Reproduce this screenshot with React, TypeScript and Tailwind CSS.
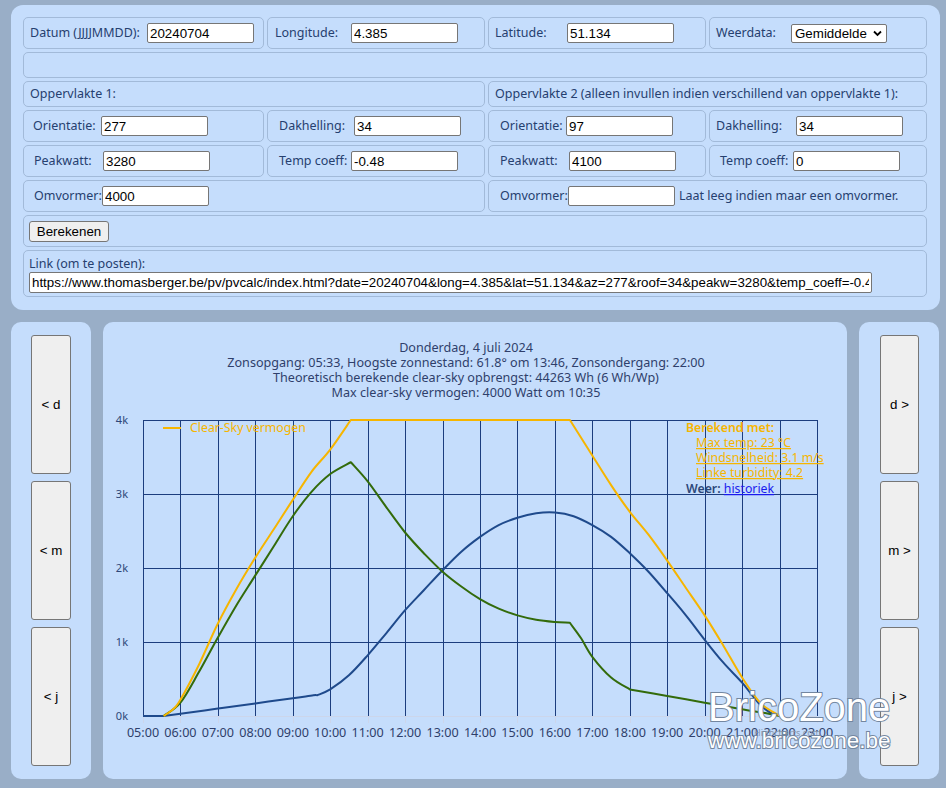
import React from "react";

type P = [number, number];

const hx = (t: number) => 40 + (t - 5) * (674 / 18);
const vy = (v: number) => 394 - v * 74;

function seg(pts: P[], first: boolean) {
  const p = pts.map(([t, v]) => [hx(t), vy(v)]);
  let d = first ? `M${p[0][0].toFixed(1)},${p[0][1].toFixed(1)}` : "";
  for (let i = 0; i < p.length - 1; i++) {
    const p0 = p[i - 1] || p[i];
    const p1 = p[i];
    const p2 = p[i + 1];
    const p3 = p[i + 2] || p2;
    const k = 1 / 6;
    const c1x = p1[0] + (p2[0] - p0[0]) * k;
    const c1y = p1[1] + (p2[1] - p0[1]) * k;
    const c2x = p2[0] - (p3[0] - p1[0]) * k;
    const c2y = p2[1] - (p3[1] - p1[1]) * k;
    d += ` C${c1x.toFixed(1)},${c1y.toFixed(1)} ${c2x.toFixed(1)},${c2y.toFixed(1)} ${p2[0].toFixed(1)},${p2[1].toFixed(1)}`;
  }
  return d;
}

function path(segs: P[][]) {
  return segs.map((s, i) => seg(s, i === 0)).join(" ");
}

const yellow = path([
  [
    [5.55, 0],
    [5.8, 0.09],
    [6, 0.22],
    [6.5, 0.7],
    [7, 1.25],
    [7.5, 1.72],
    [8, 2.14],
    [8.5, 2.53],
    [9, 2.92],
    [9.5, 3.3],
    [10, 3.6],
    [10.55, 4.0],
  ],
  [
    [10.55, 4.0],
    [16.4, 4.0],
  ],
  [
    [16.4, 4.0],
    [17, 3.52],
    [17.5, 3.12],
    [18, 2.76],
    [18.5, 2.45],
    [19, 2.1],
    [19.5, 1.73],
    [20, 1.36],
    [20.5, 0.95],
    [21, 0.52],
    [21.5, 0.17],
    [22.02, 0],
  ],
]);

const green = path([
  [
    [5.55, 0],
    [6, 0.18],
    [6.5, 0.6],
    [7, 1.06],
    [7.5, 1.5],
    [8, 1.9],
    [8.5, 2.3],
    [9, 2.7],
    [9.5, 3.03],
    [10, 3.27],
    [10.55, 3.43],
  ],
  [
    [10.55, 3.43],
    [11, 3.17],
    [11.5, 2.82],
    [12, 2.48],
    [12.5, 2.2],
    [13, 1.95],
    [13.5, 1.75],
    [14, 1.58],
    [14.5, 1.45],
    [15, 1.36],
    [15.5, 1.3],
    [16, 1.27],
    [16.4, 1.26],
  ],
  [
    [16.4, 1.26],
    [16.7, 1.05],
    [17, 0.8],
    [17.5, 0.52],
    [18, 0.36],
  ],
  [
    [18, 0.36],
    [19, 0.27],
    [20, 0.18],
    [21, 0.09],
    [21.6, 0.04],
    [22, 0],
  ],
]);

const blue = path([
  [
    [5, 0],
    [5.55, 0],
  ],
  [
    [5.55, 0],
    [6, 0.03],
    [7, 0.1],
    [8, 0.17],
    [9, 0.24],
    [9.55, 0.28],
    [9.65, 0.28],
  ],
  [
    [9.65, 0.28],
    [10, 0.36],
    [10.5, 0.55],
    [11, 0.82],
    [11.5, 1.12],
    [12, 1.43],
    [12.5, 1.7],
    [13, 1.97],
    [13.5, 2.22],
    [14, 2.42],
    [14.5, 2.58],
    [15, 2.68],
    [15.5, 2.74],
    [16, 2.75],
    [16.5, 2.7],
    [17, 2.58],
    [17.5, 2.42],
    [18, 2.2],
    [18.5, 1.95],
    [19, 1.66],
    [19.5, 1.36],
    [20, 1.03],
    [20.5, 0.72],
    [21, 0.45],
    [21.5, 0.14],
    [21.9, 0],
  ],
]);

const hours = Array.from({ length: 19 }, (_, i) => 5 + i);
const pad = (n: number) => (n < 10 ? `0${n}` : `${n}`);

function Chart() {
  const gx = (t: number) => Math.round(hx(t)) + 0.5;
  const ff = "'Noto Sans', 'DejaVu Sans', sans-serif";
  return (
    <svg width="744" height="457" viewBox="0 0 744 457" className="block">
      <g fontFamily={ff} fontSize="12.6" fill="#2f3f6b" textAnchor="middle">
        <text x="363" y="30">Donderdag, 4 juli 2024</text>
        <text x="363" y="44.5">
          Zonsopgang: 05:33, Hoogste zonnestand: 61.8° om 13:46, Zonsondergang: 22:00
        </text>
        <text x="363" y="59.5">Theoretisch berekende clear-sky opbrengst: 44263 Wh (6 Wh/Wp)</text>
        <text x="363" y="74.5">Max clear-sky vermogen: 4000 Watt om 10:35</text>
      </g>
      <g stroke="#1c3d7e" strokeWidth="1" shapeRendering="crispEdges">
        {[0, 1, 2, 3, 4].map((v) => (
          <line key={v} x1="40" x2="714" y1={Math.round(vy(v)) + 0.5} y2={Math.round(vy(v)) + 0.5} />
        ))}
        {hours.map((h) => (
          <line key={h} x1={gx(h)} x2={gx(h)} y1="98" y2="394" />
        ))}
      </g>
      <g stroke="#ccd6eb" strokeWidth="1" shapeRendering="crispEdges">
        <line x1="40" x2="714" y1="394.5" y2="394.5" />
        {hours.map((h) => (
          <line key={h} x1={gx(h)} x2={gx(h)} y1="395" y2="401" />
        ))}
      </g>
      <g fontFamily={ff} fontSize="11" fill="#2d4778" textAnchor="end">
        {[0, 1, 2, 3, 4].map((v) => (
          <text key={v} x="25" y={vy(v) + 4}>
            {v}k
          </text>
        ))}
      </g>
      <g fontFamily={ff} fontSize="12.6" fill="#2f3f6b" textAnchor="middle">
        {hours.map((h) => (
          <text key={h} x={hx(h)} y="414.5">
            {pad(h)}:00
          </text>
        ))}
      </g>
      <text x="718" y="414" textAnchor="end" fontFamily={ff} fontSize="9" fill="#8a97ad">
        Highcharts.com
      </text>
      <path d={blue} fill="none" stroke="#1f4a8c" strokeWidth="2" strokeLinejoin="round" />
      <path d={green} fill="none" stroke="#336b0b" strokeWidth="2" strokeLinejoin="round" />
      <path d={yellow} fill="none" stroke="#f6b500" strokeWidth="2" strokeLinejoin="round" />
      <line x1="60" x2="78" y1="106" y2="106" stroke="#f6b500" strokeWidth="2" />
      <text x="87" y="110" fontFamily={ff} fontSize="12.3" fill="#f6b500">
        Clear-Sky vermogen
      </text>
      <g fontFamily={ff} fontSize="12.3" fill="#f6b500">
        <text x="583" y="110" fontWeight="600">
          Berekend met:
        </text>
        <text x="593" y="125" textDecoration="underline">
          Max temp: 23 °C
        </text>
        <text x="593" y="140" textDecoration="underline">
          Windsnelheid: 3.1 m/s
        </text>
        <text x="593" y="155" textDecoration="underline">
          Linke turbidity: 4.2
        </text>
        <text x="583" y="171" fill="#2d4778" fontWeight="600">
          Weer:{" "}
          <tspan fill="#1a1aee" fontWeight="400" textDecoration="underline">
            historiek
          </tspan>
        </text>
      </g>
    </svg>
  );
}

const labelCls = "shrink-0 whitespace-nowrap text-[12.5px] text-[#26406f] [font-family:'Noto_Sans',Lato,sans-serif]";
const inputCls =
  "h-[20px] w-[107px] shrink-0 rounded-[2px] border border-[#767676] bg-white px-[2px] text-[13.33px] leading-[18px] text-black outline-none [font-family:'Liberation_Sans',Arial,sans-serif]";
const cellCls = "flex items-center rounded-[5px] border border-[#a2bad9]";

function Field({ label, value, lwCls }: { label: string; value: string; lwCls: string }) {
  return (
    <>
      <span className={`${labelCls} ${lwCls}`}>{label}</span>
      <input className={inputCls} defaultValue={value} readOnly />
    </>
  );
}

function NavButton({ text }: { text: string }) {
  return (
    <button className="h-[139px] w-full rounded-[3px] border border-[#767676] bg-[#efefef] text-[13.33px] font-normal text-black [font-family:'Liberation_Sans',Arial,sans-serif]">
      {text}
    </button>
  );
}

export default function App() {
  const link =
    "https://www.thomasberger.be/pv/pvcalc/index.html?date=20240704&long=4.385&lat=51.134&az=277&roof=34&peakw=3280&temp_coeff=-0.48&inverter=4000&az2=97&roof2=34&peakw2=4100&temp_coeff2=0&weather=avg";
  return (
    <div className="relative h-[788px] w-[946px] overflow-hidden bg-[#99aec7] pl-[11px] pt-[5px]">
      <div className="w-[929px] rounded-[12px] bg-[#c5ddfc] px-[12px] pb-[13px] pt-[12px]">
        <div className="grid grid-cols-[241px_218px_218px_218px] gap-[3px]">
          <div className={`${cellCls} h-[32px] pl-[6px]`}>
            <Field label="Datum (JJJJMMDD):" value="20240704" lwCls="w-[117px]" />
          </div>
          <div className={`${cellCls} h-[32px] pl-[7px]`}>
            <Field label="Longitude:" value="4.385" lwCls="w-[76px]" />
          </div>
          <div className={`${cellCls} h-[32px] pl-[6px]`}>
            <Field label="Latitude:" value="51.134" lwCls="w-[72px]" />
          </div>
          <div className={`${cellCls} h-[32px] pl-[6px]`}>
            <span className={`${labelCls} w-[75px]`}>Weerdata:</span>
            <div
              role="combobox"
              className="relative flex h-[19px] w-[96px] shrink-0 items-center rounded-[2px] border border-[#767676] bg-white pl-[3px] text-[13.33px] leading-[17px] text-black [font-family:'Liberation_Sans',Arial,sans-serif]"
            >
              Gemiddelde
              <svg className="absolute right-[4px] top-[5px]" width="9" height="7" viewBox="0 0 9 7">
                <path d="M1 1.5 L4.5 5 L8 1.5" fill="none" stroke="#000" strokeWidth="1.8" />
              </svg>
            </div>
          </div>
          <div className={`${cellCls} col-span-4 h-[26px]`} />
          <div className={`${cellCls} col-span-2 h-[26px] pl-[6px]`}>
            <span className={labelCls}>Oppervlakte 1:</span>
          </div>
          <div className={`${cellCls} col-span-2 h-[26px] pl-[6px]`}>
            <span className={labelCls}>Oppervlakte 2 (alleen invullen indien verschillend van oppervlakte 1):</span>
          </div>
          <div className={`${cellCls} h-[32px] pl-[9px]`}>
            <Field label="Orientatie:" value="277" lwCls="w-[68px]" />
          </div>
          <div className={`${cellCls} h-[32px] pl-[11px]`}>
            <Field label="Dakhelling:" value="34" lwCls="w-[75px]" />
          </div>
          <div className={`${cellCls} h-[32px] pl-[11px]`}>
            <Field label="Orientatie:" value="97" lwCls="w-[66px]" />
          </div>
          <div className={`${cellCls} h-[32px] pl-[6px]`}>
            <Field label="Dakhelling:" value="34" lwCls="w-[80px]" />
          </div>
          <div className={`${cellCls} h-[32px] pl-[10px]`}>
            <Field label="Peakwatt:" value="3280" lwCls="w-[69px]" />
          </div>
          <div className={`${cellCls} h-[32px] pl-[11px]`}>
            <Field label="Temp coeff:" value="-0.48" lwCls="w-[72px]" />
          </div>
          <div className={`${cellCls} h-[32px] pl-[11px]`}>
            <Field label="Peakwatt:" value="4100" lwCls="w-[69px]" />
          </div>
          <div className={`${cellCls} h-[32px] pl-[10px]`}>
            <Field label="Temp coeff:" value="0" lwCls="w-[73px]" />
          </div>
          <div className={`${cellCls} col-span-2 h-[32px] pl-[10px]`}>
            <Field label="Omvormer:" value="4000" lwCls="w-[68px]" />
          </div>
          <div className={`${cellCls} col-span-2 h-[32px] pl-[11px]`}>
            <Field label="Omvormer:" value="" lwCls="w-[68px]" />
            <span className={`${labelCls} ml-[4px]`}>Laat leeg indien maar een omvormer.</span>
          </div>
          <div className={`${cellCls} col-span-4 h-[32px] pl-[5px]`}>
            <button className="h-[21px] w-[80px] rounded-[3px] border border-[#767676] bg-[#efefef] text-[13.33px] text-black [font-family:'Liberation_Sans',Arial,sans-serif]">
              Berekenen
            </button>
          </div>
          <div className="col-span-4 flex h-[47px] flex-col rounded-[5px] border border-[#a2bad9] pl-[5px] pt-[4px]">
            <span className={`${labelCls} leading-[17px]`}>Link (om te posten):</span>
            <input
              className="h-[21px] w-[843px] rounded-[2px] border border-[#767676] bg-white px-[2px] text-[13.33px] text-black outline-none [font-family:'Liberation_Sans',Arial,sans-serif]"
              defaultValue={link}
              readOnly
            />
          </div>
        </div>
      </div>

      <div className="mt-[12px] flex h-[457px] gap-[12px]">
        <div className="flex w-[80px] flex-col gap-[7px] rounded-[10px] bg-[#c5ddfc] px-[20px] py-[13px]">
          <NavButton text="< d" />
          <NavButton text="< m" />
          <NavButton text="< j" />
        </div>
        <div className="w-[744px] rounded-[10px] bg-[#c5ddfc]">
          <Chart />
        </div>
        <div className="flex w-[80px] flex-col gap-[7px] rounded-[10px] bg-[#c5ddfc] py-[13px] pl-[21px] pr-[20px]">
          <NavButton text="d >" />
          <NavButton text="m >" />
          <NavButton text="j >" />
        </div>
      </div>

      <div className="pointer-events-none absolute left-[708px] top-[684px] flex flex-col text-white [font-family:'Liberation_Sans',Arial,sans-serif] [-webkit-text-stroke:2px_#73869f] [paint-order:stroke_fill]">
        <span className="text-[40px] leading-[46px]">BricoZone</span>
        <span className="text-[22.5px] leading-[22px]">www.bricozone.be</span>
      </div>
    </div>
  );
}
